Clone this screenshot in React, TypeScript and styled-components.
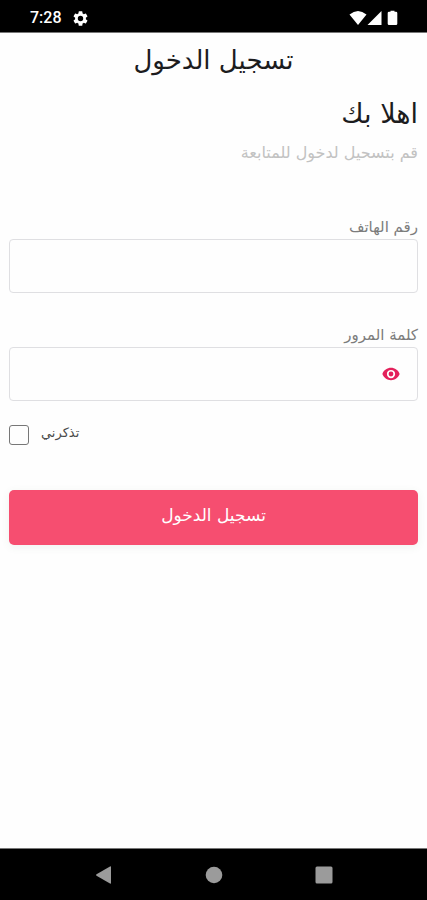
import React, { useState } from "react";
import styled, { createGlobalStyle } from "styled-components";

const GlobalStyle = createGlobalStyle`
  *, *::before, *::after { box-sizing: border-box; }
  body { margin: 0; background: #fefefe; }
  button, input { font: inherit; }
`;

const Screen = styled.div`
  display: flex;
  flex-direction: column;
  min-height: 100vh;
  background: #fefefe;
  color: #1c1c1e;
  font-family: "DejaVu Sans", sans-serif;
`;

const StatusBar = styled.header`
  display: flex;
  align-items: center;
  justify-content: space-between;
  height: 33px;
  padding: 4px 28px 0 30px;
  background: #000;
  border-bottom: 1px solid #777;
  color: #fff;
  font: 500 16px/20px Roboto, sans-serif;
`;

const StatusGroup = styled.div`
  display: flex;
  align-items: center;
  gap: 11px;
`;

const Content = styled.main`
  flex: 1;
  display: flex;
  flex-direction: column;
  padding: 11px 9px 0;
`;

const Title = styled.h1`
  margin: 0;
  font-size: 26px;
  font-weight: 400;
  line-height: 32px;
  text-align: center;
`;

const Welcome = styled.h2`
  margin: 22px 0 0;
  font-size: 27px;
  font-weight: 400;
  line-height: 32px;
`;

const Hint = styled.p`
  margin: 13px 0 0;
  color: #c2c2c2;
  font-size: 16px;
  line-height: 20px;
`;

const Form = styled.form`
  display: flex;
  flex-direction: column;
  margin-top: 54px;
`;

const Field = styled.div`
  display: flex;
  flex-direction: column;
  margin-bottom: 32px;
`;

const Label = styled.label`
  padding-bottom: 2px;
  color: #7c7c7c;
  font-size: 15px;
  line-height: 20px;
`;

const InputBox = styled.div`
  display: flex;
  align-items: center;
  height: 54px;
  padding: 0 17px;
  border: 1px solid #dfdfe2;
  border-radius: 4px;
  background: #fefefe;
`;

const TextInput = styled.input`
  flex: 1;
  min-width: 0;
  height: 100%;
  border: 0;
  outline: 0;
  background: transparent;
  font-size: 16px;
`;

const EyeButton = styled.button`
  display: flex;
  padding: 0;
  border: 0;
  background: none;
  color: #e3215b;
  cursor: pointer;
`;

const Remember = styled.div`
  display: flex;
  align-items: center;
  gap: 12px;
  margin-top: -10px;
  direction: ltr;
`;

const Checkbox = styled.input`
  appearance: none;
  width: 20px;
  height: 20px;
  margin: 0;
  border: 1px solid #777;
  border-radius: 3px;
  background: #fefefe;
  &:checked { background: #f64e70; border-color: #f64e70; }
`;

const RememberLabel = styled.label`
  padding-bottom: 4px;
  color: #4a4a4a;
  font-size: 13px;
  line-height: 20px;
`;

const Submit = styled.button`
  height: 55px;
  margin-top: 43px;
  padding: 0 0 6px;
  border: 0;
  border-radius: 5px;
  background: #f64e70;
  box-shadow: 0 2px 8px rgba(60, 100, 60, 0.08);
  color: #fff;
  font-size: 17px;
  line-height: 24px;
  cursor: pointer;
`;

const NavBar = styled.nav`
  display: flex;
  align-items: center;
  justify-content: center;
  gap: 86px;
  height: 52px;
  background: #000;
  border-top: 1px solid #777;
`;

const NavButton = styled.button`
  display: flex;
  padding: 0;
  border: 0;
  background: none;
  color: #9b9b9b;
`;

export default function App() {
  const [visible, setVisible] = useState(false);
  return (
    <Screen>
      <GlobalStyle />
      <StatusBar>
        <StatusGroup>
          <span>7:28</span>
          <svg width="15" height="15" viewBox="2 2 20 20" fill="currentColor" aria-hidden="true">
            <path d="M19.14 12.94c.04-.3.06-.61.06-.94 0-.32-.02-.64-.07-.94l2.03-1.58a.49.49 0 0 0 .12-.61l-1.92-3.32a.49.49 0 0 0-.59-.22l-2.39.96c-.5-.38-1.03-.7-1.62-.94l-.36-2.54a.48.48 0 0 0-.48-.41h-3.84a.47.47 0 0 0-.47.41l-.36 2.54c-.59.24-1.13.57-1.62.94l-2.39-.96a.48.48 0 0 0-.59.22L2.74 8.87a.47.47 0 0 0 .12.61l2.03 1.58c-.05.3-.09.63-.09.94s.02.64.07.94l-2.03 1.58a.49.49 0 0 0-.12.61l1.92 3.32c.12.22.37.29.59.22l2.39-.96c.5.38 1.03.7 1.62.94l.36 2.54c.05.24.24.41.48.41h3.84c.24 0 .44-.17.47-.41l.36-2.54c.59-.24 1.13-.56 1.62-.94l2.39.96c.22.08.47 0 .59-.22l1.92-3.32a.47.47 0 0 0-.12-.61l-2.01-1.58zM12 15.600a3.600 3.600 0 1 1 0-7.200 3.600 3.600 0 0 1 0 7.200z" />
          </svg>
        </StatusGroup>
        <svg width="50" height="16" viewBox="0 0 50 16" fill="currentColor" aria-hidden="true">
          <path d="M0.500 4.500Q9 -2.500 17.500 4.500L9 15Z" />
          <path d="M18.500 15L32.500 1V15Z" />
          <path d="M41.500 0.800h4v1h1.500q1.300 0 1.300 1.300v10.600q0 1.300-1.300 1.300h-7q-1.300 0-1.300-1.300V3.100q0-1.300 1.300-1.300h1.500z" />
        </svg>
      </StatusBar>
      <Content dir="rtl" lang="ar">
        <Title>تسجيل الدخول</Title>
        <Welcome>اهلا بك</Welcome>
        <Hint>قم بتسحيل لدخول للمتابعة</Hint>
        <Form onSubmit={(e) => e.preventDefault()}>
          <Field>
            <Label htmlFor="phone">رقم الهاتف</Label>
            <InputBox>
              <TextInput id="phone" type="tel" />
            </InputBox>
          </Field>
          <Field>
            <Label htmlFor="password">كلمة المرور</Label>
            <InputBox>
              <EyeButton type="button" aria-label="إظهار كلمة المرور" onClick={() => setVisible(!visible)}>
                <svg width="18" height="18" viewBox="0 0 24 24" fill="currentColor" aria-hidden="true">
                  <path d="M12 3.800C7 3.800 2.200 7 .5 12c1.700 5 6.500 8.200 11.500 8.200s9.800-3.200 11.500-8.200C21.800 7 17 3.800 12 3.800zM12 17.500a5.500 5.500 0 1 1 0-11 5.500 5.500 0 0 1 0 11zm0-8.700a3.200 3.200 0 1 0 0 6.400 3.200 3.200 0 0 0 0-6.400z" />
                </svg>
              </EyeButton>
              <TextInput id="password" type={visible ? "text" : "password"} />
            </InputBox>
          </Field>
          <Remember>
            <Checkbox id="remember" type="checkbox" />
            <RememberLabel htmlFor="remember">تذكرني</RememberLabel>
          </Remember>
          <Submit type="submit">تسجيل الدخول</Submit>
        </Form>
      </Content>
      <NavBar>
        <NavButton aria-label="Back">
          <svg width="24" height="24" viewBox="0 0 24 24" fill="currentColor">
            <path d="M19 4v16q0 1-1 .6L4.500 12.800q-1-.8 0-1.600L18 3.400q1-.4 1 .6z" />
          </svg>
        </NavButton>
        <NavButton aria-label="Home">
          <svg width="24" height="24" viewBox="0 0 24 24" fill="currentColor">
            <circle cx="12" cy="12" r="8.300" />
          </svg>
        </NavButton>
        <NavButton aria-label="Recents">
          <svg width="24" height="24" viewBox="0 0 24 24" fill="currentColor">
            <rect x="3.500" y="3.500" width="17" height="17" rx="1.500" />
          </svg>
        </NavButton>
      </NavBar>
    </Screen>
  );
}
